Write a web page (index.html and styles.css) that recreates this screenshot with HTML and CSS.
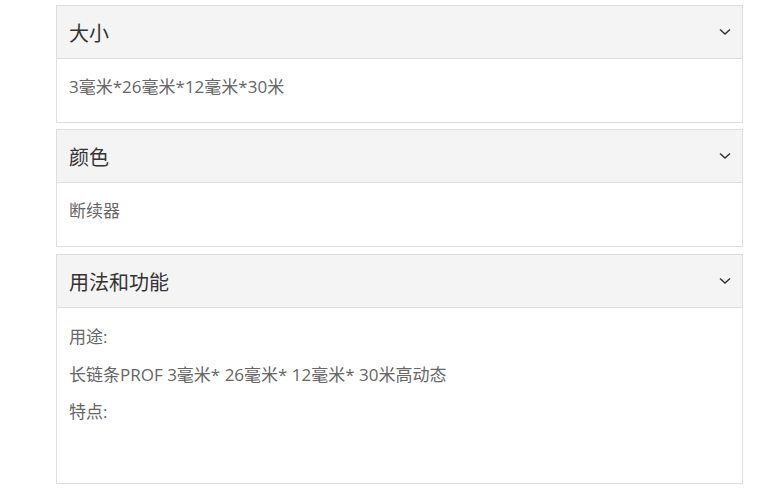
FILE: index.html
```html
<!DOCTYPE html>
<html lang="zh">
<head>
<meta charset="utf-8">
<link rel="stylesheet" href="styles.css">
</head>
<body>
<div class="accordion">
  <section class="panel">
    <div class="panel-head">
      <span class="title">大小</span>
      <svg class="chev" width="12" height="8" viewBox="0 0 12 8"><path d="M1 1.5 L6 6 L11 1.5" fill="none" stroke="#333" stroke-width="1.5"/></svg>
    </div>
    <div class="panel-body short-body">
      <p>3毫米*26毫米*12毫米*30米</p>
    </div>
  </section>
  <section class="panel">
    <div class="panel-head">
      <span class="title">颜色</span>
      <svg class="chev" width="12" height="8" viewBox="0 0 12 8"><path d="M1 1.5 L6 6 L11 1.5" fill="none" stroke="#333" stroke-width="1.5"/></svg>
    </div>
    <div class="panel-body short-body">
      <p>断续器</p>
    </div>
  </section>
  <section class="panel panel-usage">
    <div class="panel-head">
      <span class="title">用法和功能</span>
      <svg class="chev" width="12" height="8" viewBox="0 0 12 8"><path d="M1 1.5 L6 6 L11 1.5" fill="none" stroke="#333" stroke-width="1.5"/></svg>
    </div>
    <div class="panel-body usage-body">
      <p>用途:</p>
      <p>长链条PROF 3毫米* 26毫米* 12毫米* 30米高动态</p>
      <p>特点:</p>
    </div>
  </section>
</div>
</body>
</html>
```
FILE: styles.css
```css
html, body {
  margin: 0;
  padding: 0;
  background: #fff;
}
body {
  font-family: "Open Sans", "Noto Sans CJK SC", sans-serif;
}
.accordion {
  margin: 5px 0 0 56px;
  width: 687px;
  display: flex;
  flex-direction: column;
  gap: 6px;
}
.panel {
  border: 1px solid #dedede;
}
.panel-usage {
  margin-top: 1px;
}
.panel-head {
  height: 52px;
  background: #f4f4f4;
  border-bottom: 1px solid #dedede;
  display: flex;
  align-items: center;
  justify-content: space-between;
  padding: 0 11px 0 12px;
}
.title {
  font-size: 20px;
  color: #333;
}
.chev {
  display: block;
  margin-top: -1px;
}
.panel-body {
  padding: 16px 12px 0;
  box-sizing: border-box;
  color: #666;
  font-size: 17px;
}
.panel-body p {
  margin: 0;
  line-height: 24px;
}
.short-body {
  height: 63px;
}
.usage-body {
  height: 175px;
  padding-top: 17px;
  display: flex;
  flex-direction: column;
  gap: 13.5px;
}
```
